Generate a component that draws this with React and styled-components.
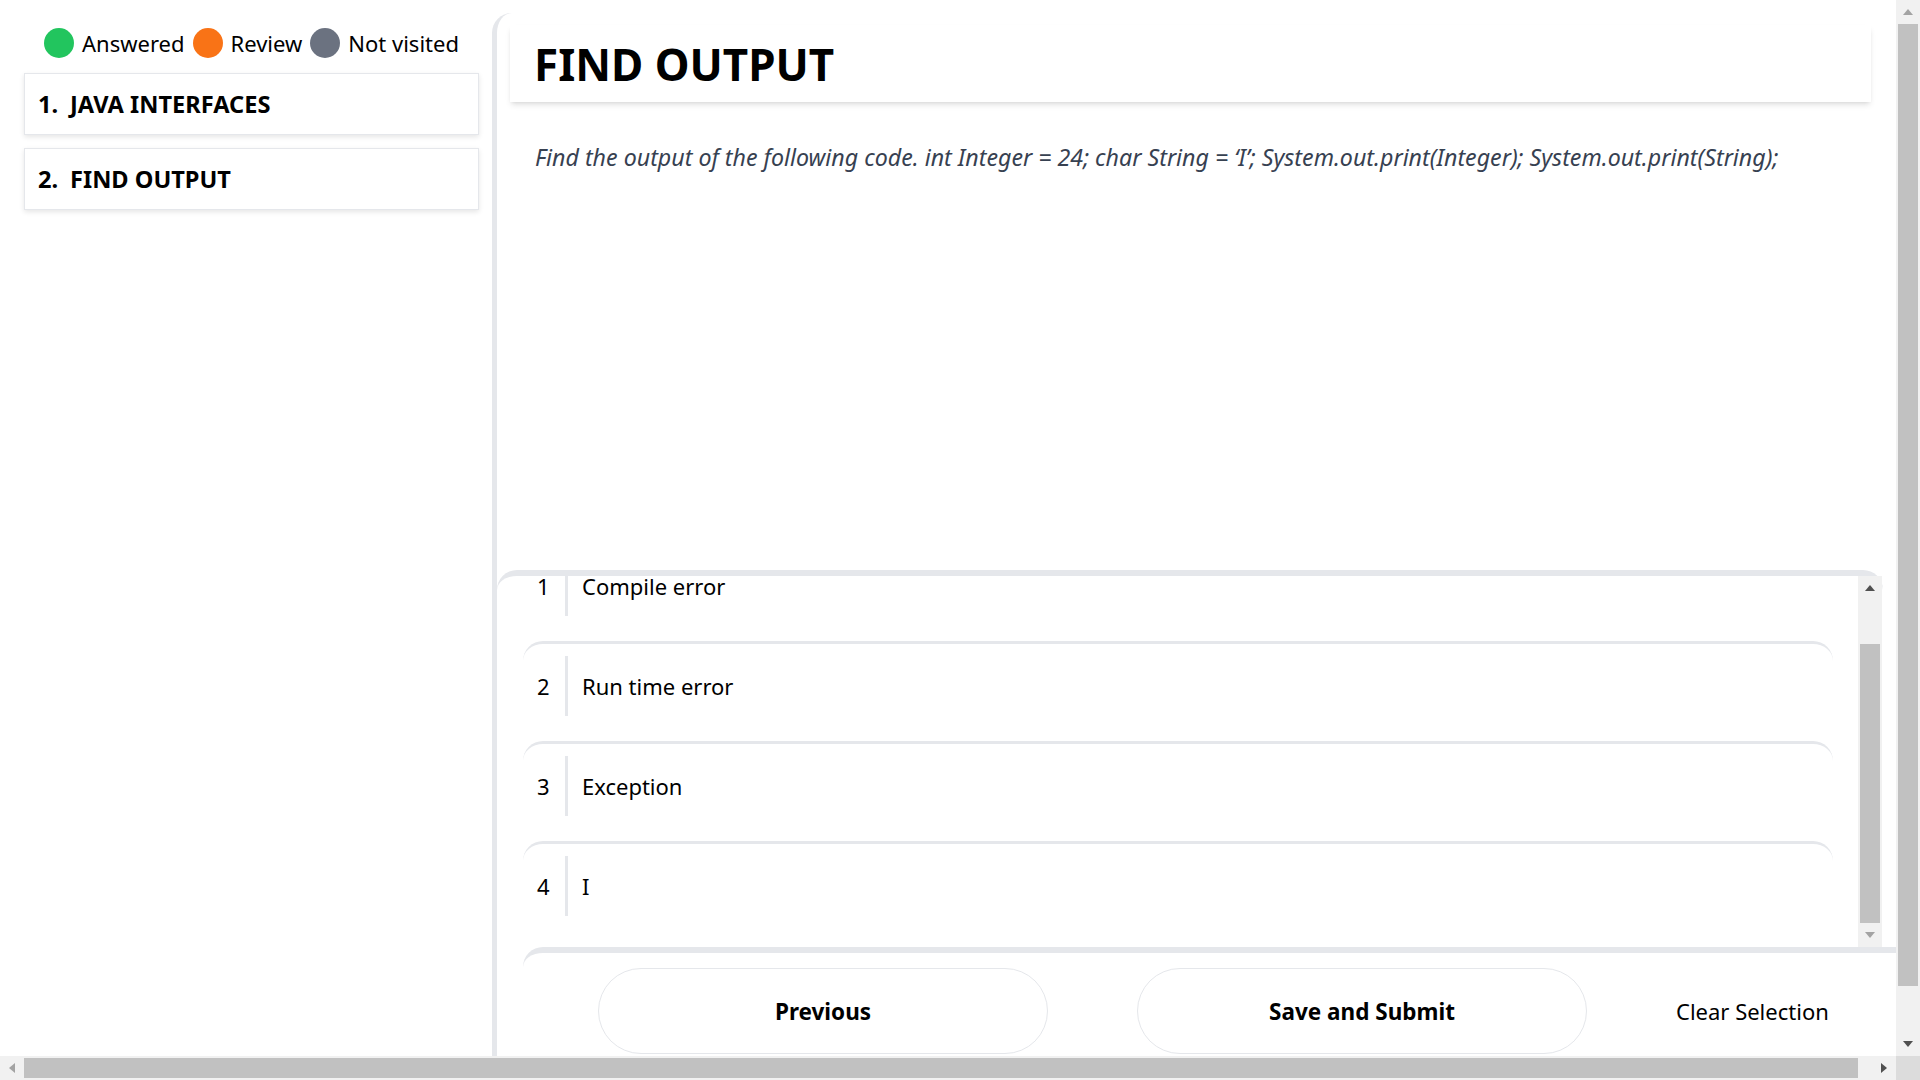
import { useEffect, useRef } from "react";
import styled, { createGlobalStyle } from "styled-components";

const GlobalStyle = createGlobalStyle`
  html, body {
    margin: 0;
    padding: 0;
    background: #fff;
  }
  body {
    font-family: "Noto Sans", "Open Sans", sans-serif;
    color: #000;
  }
  * {
    box-sizing: border-box;
  }
`;

const Page = styled.div`
  display: flex;
  width: 1940px;
  min-height: 1115px;
`;

const Sidebar = styled.aside`
  width: 492px;
  flex-shrink: 0;
  padding: 28px 13px 0 24px;
`;

const Legend = styled.div`
  display: flex;
  align-items: center;
  justify-content: center;
  gap: 8px;
  height: 30px;
  margin-bottom: 15px;
  font-size: 22px;
`;

const Dot = styled.span`
  width: 30px;
  height: 30px;
  border-radius: 50%;
  background: ${(p) => p.$color};
`;

const TopicCard = styled.div`
  height: 62px;
  margin-bottom: 13px;
  padding-left: 13px;
  display: flex;
  align-items: center;
  border: 1px solid #e5e7eb;
  box-shadow: 0 2px 5px rgba(0, 0, 0, 0.1);
  font-size: 23.6px;
  font-weight: 700;
`;

const TopicNum = styled.span`
  width: 32px;
`;

const Main = styled.main`
  flex: 1;
  margin-top: 13px;
  border-left: 5px solid #e5e7eb;
  border-top-left-radius: 20px;
  display: flex;
  flex-direction: column;
`;

const Header = styled.header`
  margin: 12px 0 0 13px;
  width: 1361px;
  height: 77px;
  padding-left: 24px;
  display: flex;
  align-items: center;
  background: #fff;
  box-shadow: 0 4px 6px -1px rgba(0, 0, 0, 0.1), 0 2px 4px -2px rgba(0, 0, 0, 0.1);
`;

const Title = styled.h1`
  margin: 0;
  font-size: 44px;
  font-weight: 700;
  line-height: 1;
`;

const Question = styled.div`
  height: 468px;
  padding: 39px 0 0 38px;
`;

const QuestionText = styled.p`
  margin: 0;
  font-size: 23.2px;
  font-style: italic;
  color: #374151;
  line-height: 33px;
`;

const OptionsWrap = styled.div`
  position: relative;
  width: 1386px;
  border-top: 6px solid #e5e7eb;
  border-radius: 20px 20px 0 0;
`;

const OptionList = styled.div`
  height: 371px;
  overflow-y: scroll;
  padding: 33px 0 11px 26px;
  scrollbar-width: none;
`;

const OptionRow = styled.div`
  width: 1310px;
  padding: 12px 0 25px 14px;
  display: flex;
  align-items: center;
  border-top: 3px solid #e5e7eb;
  border-radius: 20px 20px 0 0;
  font-size: 22px;
`;

const OptionNum = styled.span`
  width: 28px;
`;

const OptionText = styled.span`
  height: 60px;
  display: flex;
  align-items: center;
  padding-left: 14px;
  border-left: 3px solid #e5e7eb;
`;

const Footer = styled.footer`
  width: 1417px;
  margin-left: 26px;
  padding: 15px 0 61px 75px;
  display: flex;
  align-items: center;
  gap: 89px;
  border-top: 6px solid #e5e7eb;
  border-top-left-radius: 20px;
`;

const PillButton = styled.button`
  width: 450px;
  height: 86px;
  border-radius: 43px;
  border: 1px solid #e5e7eb;
  background: #fff;
  color: #000;
  font-family: inherit;
  font-size: 22.5px;
  font-weight: 700;
  cursor: pointer;
`;

const TextButton = styled.button`
  padding: 0;
  border: none;
  background: none;
  color: #000;
  font-family: inherit;
  font-size: 22px;
  cursor: pointer;
`;

/* scrollbars drawn over the content, the way the browser shows them */
const Bar = styled.div`
  display: flex;
  flex-direction: ${(p) => (p.$vertical ? "column" : "row")};
  background: #f1f1f1;
  z-index: 10;
`;

const PageVBar = styled(Bar)`
  position: fixed;
  top: 0;
  right: 0;
  width: 24px;
  height: 1056px;
`;

const PageHBar = styled(Bar)`
  position: fixed;
  left: 0;
  bottom: 0;
  width: 1896px;
  height: 24px;
`;

const Corner = styled.div`
  position: fixed;
  right: 0;
  bottom: 0;
  width: 24px;
  height: 24px;
  background: #dcdcdc;
  z-index: 10;
`;

const InnerBar = styled(Bar)`
  position: absolute;
  top: 0;
  right: 1px;
  bottom: 0;
  width: 24px;
`;

const ArrowBtn = styled.div`
  flex: 0 0 24px;
  display: flex;
  align-items: center;
  justify-content: center;
`;

const Thumb = styled.div`
  flex: 0 0 ${(p) => p.$size}px;
  background: #c1c1c1;
  margin: ${(p) =>
    p.$vertical ? `${p.$offset}px 2px 0` : `2px 0 2px ${p.$offset}px`};
`;

const Fill = styled.div`
  flex: 1;
`;

const arrows = {
  up: { w: 10, h: 6, pts: "5,0 10,6 0,6" },
  down: { w: 10, h: 6, pts: "0,0 10,0 5,6" },
  left: { w: 6, h: 10, pts: "0,5 6,0 6,10" },
  right: { w: 6, h: 10, pts: "0,0 6,5 0,10" },
};

const Arrow = ({ dir, color }) => {
  const a = arrows[dir];
  return (
    <ArrowBtn>
      <svg width={a.w} height={a.h} viewBox={`0 0 ${a.w} ${a.h}`}>
        <polygon points={a.pts} fill={color} />
      </svg>
    </ArrowBtn>
  );
};

const ScrollBar = ({ as: Comp, vertical, offset, size, startColor, endColor }) => (
  <Comp $vertical={vertical}>
    <Arrow dir={vertical ? "up" : "left"} color={startColor} />
    <Thumb $vertical={vertical} $offset={offset} $size={size} />
    <Fill />
    <Arrow dir={vertical ? "down" : "right"} color={endColor} />
  </Comp>
);

const legend = [
  { label: "Answered", color: "#22c55e" },
  { label: "Review", color: "#f97316" },
  { label: "Not visited", color: "#6b7280" },
];

const topics = ["JAVA INTERFACES", "FIND OUTPUT"];

const options = ["Compile error", "Run time error", "Exception", "I"];

export default function App() {
  const listRef = useRef(null);

  useEffect(() => {
    if (listRef.current) listRef.current.scrollTop = 68;
  }, []);

  return (
    <>
      <GlobalStyle />
      <Page>
        <Sidebar>
          <Legend>
            {legend.flatMap((l) => [
              <Dot key={l.color} $color={l.color} />,
              <span key={l.label}>{l.label}</span>,
            ])}
          </Legend>
          {topics.map((t, i) => (
            <TopicCard key={t}>
              <TopicNum>{i + 1}.</TopicNum>
              {t}
            </TopicCard>
          ))}
        </Sidebar>
        <Main>
          <Header>
            <Title>FIND OUTPUT</Title>
          </Header>
          <Question>
            <QuestionText>
              Find the output of the following code. int Integer = 24; char
              String = ‘I’; System.out.print(Integer); System.out.print(String);
            </QuestionText>
          </Question>
          <OptionsWrap>
            <OptionList ref={listRef}>
              {options.map((o, i) => (
                <OptionRow key={o}>
                  <OptionNum>{i + 1}</OptionNum>
                  <OptionText>{o}</OptionText>
                </OptionRow>
              ))}
            </OptionList>
            <ScrollBar
              as={InnerBar}
              vertical
              offset={44}
              size={279}
              startColor="#505050"
              endColor="#a3a3a3"
            />
          </OptionsWrap>
          <Footer>
            <PillButton>Previous</PillButton>
            <PillButton>Save and Submit</PillButton>
            <TextButton>Clear Selection</TextButton>
          </Footer>
        </Main>
      </Page>
      <ScrollBar
        as={PageVBar}
        vertical
        offset={0}
        size={962}
        startColor="#a3a3a3"
        endColor="#505050"
      />
      <ScrollBar
        as={PageHBar}
        offset={0}
        size={1834}
        startColor="#a3a3a3"
        endColor="#505050"
      />
      <Corner />
    </>
  );
}
